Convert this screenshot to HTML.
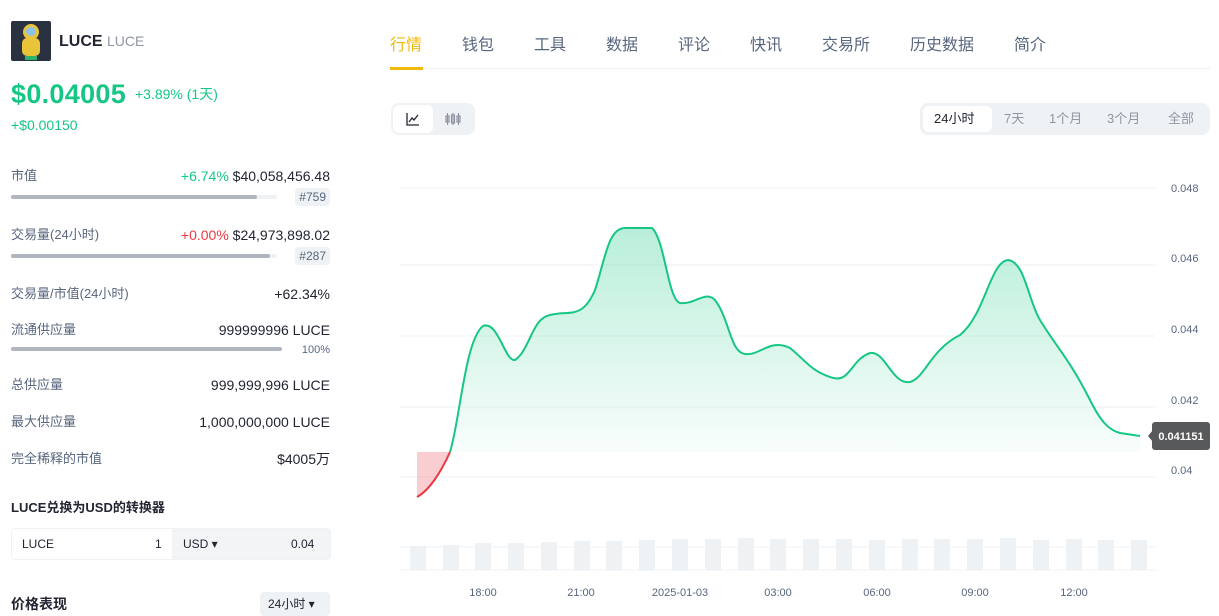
<!DOCTYPE html>
<html><head><meta charset="utf-8"><style>
*{margin:0;padding:0;box-sizing:border-box}
body{width:1219px;height:607px;overflow:hidden;background:#fff;font-family:"Liberation Sans","Noto Sans CJK SC",sans-serif;color:#222531;position:relative}
.a{position:absolute;white-space:nowrap;line-height:18px}
.lbl{font-size:13px;color:#58667e}
.val{font-size:14px;color:#222531;text-align:right;right:889px}
.g{color:#16c784}.r{color:#ea3943}
.bar{position:absolute;height:4px;background:#eff2f5;border-radius:2px}
.bar i{display:block;height:4px;background:#b1b5c0;border-radius:2px}
.rank{position:absolute;right:889px;background:#eff2f5;color:#58667e;font-size:12px;line-height:14px;padding:2px 4px;border-radius:4px}
.tab{position:absolute;top:36px;font-size:16px;color:#58667e;line-height:20px}
</style></head><body>
<div class="a" style="left:11px;top:21px;width:40px;height:40px;background:#2a3140;border-radius:2px;overflow:hidden">
<div style="position:absolute;left:12px;top:3px;width:16px;height:16px;border-radius:50%;background:#e8c43a"></div>
<div style="position:absolute;left:15px;top:6px;width:10px;height:9px;border-radius:50%;background:#8ec3e8"></div>
<div style="position:absolute;left:11px;top:17px;width:18px;height:18px;border-radius:5px;background:#e8c43a"></div>
<div style="position:absolute;left:14px;top:35px;width:12px;height:4px;background:#2fb36a"></div></div>
<div class="a" style="left:59px;top:32px;font-size:16px;font-weight:bold">LUCE <span style="font-weight:normal;color:#8f96a3;font-size:14px">LUCE</span></div>
<div class="a g" style="left:11px;top:80px;font-size:27px;line-height:28px;font-weight:bold;letter-spacing:0.3px">$0.04005</div>
<div class="a g" style="left:135px;top:85px;font-size:14px">+3.89% (1天)</div>
<div class="a g" style="left:11px;top:116px;font-size:14px">+$0.00150</div>

<div class="a lbl" style="left:11px;top:167px">市值</div>
<div class="a val" style="top:167px"><span class="g">+6.74%</span> $40,058,456.48</div>
<div class="bar" style="left:11px;top:195px;width:266px"><i style="width:246px"></i></div>
<div class="rank" style="top:188px">#759</div>

<div class="a lbl" style="left:11px;top:226px">交易量(24小时)</div>
<div class="a val" style="top:226px"><span class="r">+0.00%</span> $24,973,898.02</div>
<div class="bar" style="left:11px;top:254px;width:266px"><i style="width:259px"></i></div>
<div class="rank" style="top:247px">#287</div>

<div class="a lbl" style="left:11px;top:285px">交易量/市值(24小时)</div>
<div class="a val" style="top:285px">+62.34%</div>
<div class="a lbl" style="left:11px;top:321px">流通供应量</div>
<div class="a val" style="top:321px">999999996 LUCE</div>
<div class="bar" style="left:11px;top:347px;width:271px"><i style="width:271px"></i></div>
<div class="a" style="right:889px;top:341px;font-size:11px;color:#58667e">100%</div>
<div class="a lbl" style="left:11px;top:376px">总供应量</div>
<div class="a val" style="top:376px">999,999,996 LUCE</div>
<div class="a lbl" style="left:11px;top:413px">最大供应量</div>
<div class="a val" style="top:413px">1,000,000,000 LUCE</div>
<div class="a lbl" style="left:11px;top:450px">完全稀释的市值</div>
<div class="a val" style="top:450px">$4005万</div>

<div class="a" style="left:11px;top:499px;font-size:13px;font-weight:bold">LUCE兑换为USD的转换器</div>
<div class="a" style="left:11px;top:528px;width:320px;height:32px;border:1px solid #eff2f5;border-radius:4px;overflow:hidden;font-size:12px">
<div class="a" style="left:10px;top:6px">LUCE</div><div class="a" style="left:143px;top:6px">1</div>
<div class="a" style="left:160px;top:0;width:160px;height:32px;background:#f3f4f6"></div>
<div class="a" style="left:171px;top:6px">USD ▾</div><div class="a" style="left:279px;top:6px">0.04</div></div>
<div class="a" style="left:11px;top:595px;font-size:14px;font-weight:bold">价格表现</div>
<div class="a" style="left:260px;top:592px;width:70px;height:24px;background:#eff2f5;border-radius:4px;font-size:12px;padding:3px 8px">24小时 ▾</div>

<div class="tab" style="left:390px;color:#f0b90b">行情</div>
<div class="tab" style="left:462px">钱包</div>
<div class="tab" style="left:534px">工具</div>
<div class="tab" style="left:606px">数据</div>
<div class="tab" style="left:678px">评论</div>
<div class="tab" style="left:750px">快讯</div>
<div class="tab" style="left:822px">交易所</div>
<div class="tab" style="left:910px">历史数据</div>
<div class="tab" style="left:1014px">简介</div>
<div class="a" style="left:390px;top:68px;width:820px;height:1px;background:#eff2f5"></div>
<div class="a" style="left:390px;top:67px;width:33px;height:3px;background:#f0b90b"></div>

<div class="a" style="left:391px;top:103px;width:84px;height:32px;background:#eff2f5;border-radius:8px">
<div class="a" style="left:2px;top:2px;width:40px;height:28px;background:#fff;border-radius:6px"></div>
<svg class="a" style="left:15px;top:9px" width="14" height="14" viewBox="0 0 14 14" fill="none" stroke="#222531" stroke-width="1.3"><path d="M1 1V13H13M3 10L6 6L8 8L12 3"/></svg>
<svg class="a" style="left:54px;top:9px" width="16" height="14" viewBox="0 0 16 14" fill="none" stroke="#8f96a3" stroke-width="1.2"><rect x="1" y="4" width="3" height="6"/><rect x="6.5" y="3" width="3" height="8"/><rect x="12" y="4" width="3" height="6"/><path d="M2.5 1V13M8 1V13M13.5 1V13"/></svg></div>

<div class="a" style="left:920px;top:103px;width:290px;height:32px;background:#eff2f5;border-radius:8px;font-size:13px;color:#8f96a3">
<div class="a" style="left:3px;top:3px;width:69px;height:26px;background:#fff;border-radius:6px"></div>
<div class="a" style="left:14px;top:7px;color:#222531">24小时</div>
<div class="a" style="left:84px;top:7px">7天</div>
<div class="a" style="left:129px;top:7px">1个月</div>
<div class="a" style="left:187px;top:7px">3个月</div>
<div class="a" style="left:248px;top:7px">全部</div></div>

<svg class="a" style="left:0;top:0" width="1219" height="607">
<defs><linearGradient id="gf" x1="0" y1="0" x2="0" y2="1"><stop offset="0" stop-color="#16c784" stop-opacity=".3"/><stop offset="1" stop-color="#16c784" stop-opacity=".03"/></linearGradient></defs>
<g stroke="#eff2f5" stroke-width="1"><path d="M400 188H1155M400 265H1155M400 336H1155M400 407H1155M400 477H1155M400 547H1155M400 570H1155"/></g>
<path d="M417 497C430 490 442 470 450 452L417 452Z" fill="#ea3943" fill-opacity=".25"/>
<path d="M417 497C430 490 442 470 450 452" fill="none" stroke="#ea3943" stroke-width="2"/>
<path d="M450 452C460 420 465 340 483 326C498 320 505 362 515 360C530 350 532 318 550 315C570 310 582 320 595 290C605 260 608 228 625 228L652 228C665 240 668 300 680 303C695 305 705 290 715 300C730 320 730 352 745 354C760 356 770 338 790 348C805 360 810 370 830 377C850 385 850 360 870 353C885 350 892 385 910 382C925 378 930 350 960 335C985 315 990 262 1008 260C1025 262 1028 300 1040 320C1055 345 1070 360 1090 400C1100 420 1108 430 1120 433L1140 436" fill="none" stroke="#16c784" stroke-width="2"/>
<path d="M450 452C460 420 465 340 483 326C498 320 505 362 515 360C530 350 532 318 550 315C570 310 582 320 595 290C605 260 608 228 625 228L652 228C665 240 668 300 680 303C695 305 705 290 715 300C730 320 730 352 745 354C760 356 770 338 790 348C805 360 810 370 830 377C850 385 850 360 870 353C885 350 892 385 910 382C925 378 930 350 960 335C985 315 990 262 1008 260C1025 262 1028 300 1040 320C1055 345 1070 360 1090 400C1100 420 1108 430 1120 433L1140 436V452Z" fill="url(#gf)"/>
<g fill="#eff2f5">
<rect x="410" y="546" width="16" height="24"/><rect x="443" y="545" width="16" height="25"/><rect x="475" y="543" width="16" height="27"/><rect x="508" y="543" width="16" height="27"/><rect x="541" y="542" width="16" height="28"/><rect x="574" y="541" width="16" height="29"/><rect x="606" y="541" width="16" height="29"/><rect x="639" y="540" width="16" height="30"/><rect x="672" y="539" width="16" height="31"/><rect x="705" y="539" width="16" height="31"/><rect x="738" y="538" width="16" height="32"/><rect x="770" y="539" width="16" height="31"/><rect x="803" y="539" width="16" height="31"/><rect x="836" y="539" width="16" height="31"/><rect x="869" y="540" width="16" height="30"/><rect x="902" y="539" width="16" height="31"/><rect x="934" y="539" width="16" height="31"/><rect x="967" y="539" width="16" height="31"/><rect x="1000" y="538" width="16" height="32"/><rect x="1033" y="540" width="16" height="30"/><rect x="1066" y="539" width="16" height="31"/><rect x="1098" y="540" width="16" height="30"/><rect x="1131" y="540" width="16" height="30"/></g>
<path d="M1148 436L1153 430V442Z" fill="#58595b"/>
<rect x="1152" y="422" width="58" height="28" rx="3" fill="#58595b"/>
<text x="1181" y="440" font-size="11" font-weight="bold" fill="#fff" text-anchor="middle" font-family="Liberation Sans">0.041151</text>
<g font-size="11" fill="#58667e" font-family="Liberation Sans"><text x="1171" y="192">0.048</text><text x="1171" y="262">0.046</text><text x="1171" y="333">0.044</text><text x="1171" y="404">0.042</text><text x="1171" y="474">0.04</text>
<g text-anchor="middle"><text x="483" y="596">18:00</text><text x="581" y="596">21:00</text><text x="680" y="596">2025-01-03</text><text x="778" y="596">03:00</text><text x="877" y="596">06:00</text><text x="975" y="596">09:00</text><text x="1074" y="596">12:00</text></g></g>
</svg>
</body></html>
